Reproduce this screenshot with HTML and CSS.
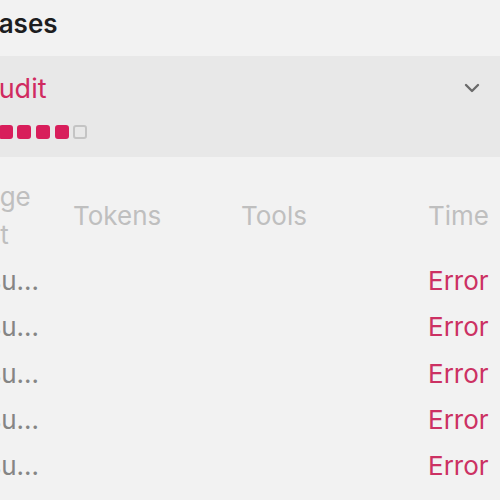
FILE: index.html
```html
<!DOCTYPE html>
<html lang="en">
<head>
  <meta charset="UTF-8" />
  <meta name="viewport" content="width=device-width, initial-scale=1.0" />
  <title>Phases</title>
  <link rel="stylesheet" href="styles.css">
</head>
<body>
  <div class="panel">
    <!-- section title -->
    <h2 class="section-title">Phases</h2>

    <!-- phase accordion -->
    <div class="phase">
      <div class="phase-info">
        <div class="phase-name">Audit</div>
        <div class="phase-dots">
          <span class="dot done"></span>
          <span class="dot done"></span>
          <span class="dot done"></span>
          <span class="dot done"></span>
          <span class="dot done"></span>
          <span class="dot"></span>
        </div>
      </div>
      <svg class="chevron" width="16" height="10" viewBox="0 0 16 10" fill="none">
        <path d="M2 2 L8 8 L14 2" stroke="#6b6b6b" stroke-width="2.4" stroke-linecap="round" stroke-linejoin="round"/>
      </svg>
    </div>

    <!-- runs table -->
    <div class="runs">
      <div class="runs-head">
        <div class="col-msg">Usage Cost</div>
        <div>Tokens</div>
        <div>Tools</div>
        <div>Time</div>
      </div>
      <div class="runs-row">
        <div class="cell-msg">Measu…</div>
        <div></div>
        <div></div>
        <div class="cell-error">Error</div>
      </div>
      <div class="runs-row">
        <div class="cell-msg">Measu…</div>
        <div></div>
        <div></div>
        <div class="cell-error">Error</div>
      </div>
      <div class="runs-row">
        <div class="cell-msg">Measu…</div>
        <div></div>
        <div></div>
        <div class="cell-error">Error</div>
      </div>
      <div class="runs-row">
        <div class="cell-msg">Measu…</div>
        <div></div>
        <div></div>
        <div class="cell-error">Error</div>
      </div>
      <div class="runs-row">
        <div class="cell-msg">Measu…</div>
        <div></div>
        <div></div>
        <div class="cell-error">Error</div>
      </div>
    </div>
  </div>
</body>
</html>
```

FILE: styles.css
```css
/* base */
body {
  margin: 0;
  background: #f2f2f2;
  font-family: 'Inter', 'Liberation Sans', sans-serif;
  color: #1d1d1f;
  overflow: hidden;
}
/* the panel is wider than the window, its left edge is cut off */
.panel {
  margin-left: -66px;
}
.section-title {
  margin: 0;
  padding: 8px 0 16px 32px;
  font-size: 26px;
  line-height: 32px;
  font-weight: 600;
}
/* phase accordion */
.phase {
  background: #e8e8e8;
  display: flex;
  align-items: flex-start;
  justify-content: space-between;
  padding: 17px 20px 18px 46px;
}
.phase-name {
  font-size: 27px;
  line-height: 32px;
  color: #d02a60;
}
.phase-dots {
  display: flex;
  gap: 4.7px;
  margin-top: 20px;
}
.dot {
  width: 14px;
  height: 14px;
  box-sizing: border-box;
  border-radius: 3px;
  border: 2px solid #c4c4c4;
}
.dot.done {
  background: #d81e5b;
  border-color: #d81e5b;
}
.chevron {
  margin-top: 10px;
}
/* runs table */
.runs {
  font-size: 26px;
  padding-right: 11px;
}
.runs-head,
.runs-row {
  display: grid;
  grid-template-columns: 139px 168px 187px auto;
  align-items: center;
}
.runs-head {
  color: #bfbfbf;
  line-height: 38px;
  padding: 21px 0 4px;
}
.col-msg {
  width: 90px;
  margin-left: 18px;
}
.runs-row {
  line-height: 46.3px;
}
.cell-msg {
  color: #858585;
  white-space: nowrap;
}
.cell-error {
  color: #cc3163;
}
```
